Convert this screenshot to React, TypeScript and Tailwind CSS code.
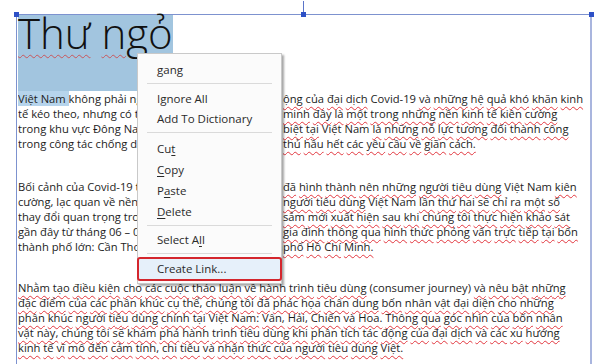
import React from 'react';

const plain = new Set(['Việt', 'Nam', 'Covid-19', '(consumer', 'journey)', '–', '06']);

function Words({ text }: { text: string }) {
  const parts = text.split(/(\s+)/);
  return (
    <>
      {parts.map((p, i) =>
        p.trim() === '' || plain.has(p) ? (
          <React.Fragment key={i}>{p}</React.Fragment>
        ) : (
          <span
            key={i}
            className="underline decoration-wavy decoration-[#e2373f] decoration-1 underline-offset-[3px]"
          >
            {p}
          </span>
        ),
      )}
    </>
  );
}

interface SplitLine {
  left: string;
  right: string;
}

// lines that run behind the context menu: the right half starts where the menu ends
function Split({ left, right }: SplitLine) {
  return (
    <div className="flex whitespace-nowrap">
      <span className="w-[265px] shrink-0 overflow-hidden">
        <Words text={left} />
      </span>
      <span>
        <Words text={right} />
      </span>
    </div>
  );
}

const p1: SplitLine[] = [
  { left: 'không phải ngoại lệ trước những tác đ', right: 'ộng của đại dịch Covid-19 và những hệ quả khó khăn kinh' },
  { left: 'tế kéo theo, nhưng có thể thấy thực tế đã chứng ', right: 'minh đây là một trong những nền kinh tế kiên cường' },
  { left: 'trong khu vực Đông Nam Á. Điều đặc ', right: 'biệt tại Việt Nam là những nỗ lực tương đối thành công' },
  { left: 'trong công tác chống dịch và người dân tuân ', right: 'thủ hầu hết các yêu cầu về giãn cách.' },
];

const p2: SplitLine[] = [
  { left: 'Bối cảnh của Covid-19 trong gần hai năm qua ', right: 'đã hình thành nên những người tiêu dùng Việt Nam kiên' },
  { left: 'cường, lạc quan về nền kinh tế. Báo cáo về ', right: 'người tiêu dùng Việt Nam lần thứ hai sẽ chỉ ra một số' },
  { left: 'thay đổi quan trọng trong xu hướng mua ', right: 'sắm mới xuất hiện sau khi chúng tôi thực hiện khảo sát' },
  { left: 'gần đây từ tháng 06 – 07/2021 với 1.000 hộ ', right: 'gia đình thông qua hình thức phỏng vấn trực tiếp tại bốn' },
  { left: 'thành phố lớn: Cần Thơ, Đà Nẵng, Hà Nội và Thành ', right: 'phố Hồ Chí Minh.' },
];

const p3 = [
  'Nhằm tạo điều kiện cho các cuộc thảo luận về hành trình tiêu dùng (consumer journey) và nêu bật những',
  'đặc điểm của các phân khúc cụ thể, chúng tôi đã phác họa chân dung bốn nhân vật đại diện cho những',
  'phân khúc người tiêu dùng chính tại Việt Nam: Vân, Hải, Chiến và Hoa. Thông qua góc nhìn của bốn nhân',
  'vật này, chúng tôi sẽ khám phá hành trình tiêu dùng khi phân tích tác động của đại dịch và các xu hướng',
  'kinh tế vĩ mô đến cảm tính, chi tiêu và nhận thức của người tiêu dùng Việt.',
];

function Item({ children, h = 'h-[21px]' }: { children: React.ReactNode; h?: string }) {
  return <div className={`${h} flex items-center pl-[19px]`}>{children}</div>;
}

function Sep() {
  return <div className="mx-[9px] my-[3px] h-px bg-[#dadada]" />;
}

function ContextMenu() {
  return (
    <div className="absolute left-[137px] top-[53px] w-[145px] border border-[#c9c9c9] bg-[#fbfbfb] pt-[5px] pb-[2px] text-[11.5px] text-[#2a2a2a] shadow-[2px_2px_2px_rgba(0,0,0,0.35)]">
      <Item h="h-[22px]">gang</Item>
      <div className="mx-[9px] mt-[2px] mb-[5px] h-px bg-[#dadada]" />
      <Item h="h-[20px]">Ignore All</Item>
      <Item h="h-[20px]">Add To Dictionary</Item>
      <div className="mx-[9px] mt-[3px] mb-[5px] h-px bg-[#dadada]" />
      <Item>
        Cu<span className="underline underline-offset-2">t</span>
      </Item>
      <Item>
        <span className="underline underline-offset-2">C</span>opy
      </Item>
      <Item>
        P<span className="underline underline-offset-2">a</span>ste
      </Item>
      <Item>
        <span className="underline underline-offset-2">D</span>elete
      </Item>
      <Sep />
      <Item>
        Select A<span className="underline underline-offset-2">l</span>l
      </Item>
      <Sep />
      <div className="-mx-px flex h-[24px] items-center rounded-[3px] border-2 border-[#d4262d] bg-[#e6f0fa] pl-[18px]">
        Create Link...
      </div>
    </div>
  );
}

export default function App() {
  return (
    <div className="relative h-[364px] w-[600px] overflow-hidden bg-white pl-[16px] pr-[8px] pt-[14px] font-['Open_Sans',sans-serif] text-[#1d1d1d]">
      <div className="relative h-[400px] border-l border-r-2 border-t border-l-[#7d92cf] border-r-[#a9b5de] border-t-[#7d92cf] pl-px">
        {/* rotate handle line + sizing handles */}
        <div className="absolute left-[286px] top-[-14px] h-[14px] w-px bg-[#5b74c9]" />
        <div className="absolute left-[-3px] top-[-3px] h-[5px] w-[5px] bg-[#2d50c6]" />
        <div className="absolute left-[284px] top-[-3px] h-[5px] w-[5px] bg-[#2d50c6]" />
        <div className="absolute right-[-4px] top-[-3px] h-[5px] w-[5px] bg-[#2d50c6]" />

        <div className="w-[155px] h-[76px] bg-[#a2c5df]">
          <div className="whitespace-nowrap text-[42px] font-light leading-[36px] text-[#111]">
            <span className="underline decoration-wavy decoration-[#c9555a] decoration-1 underline-offset-[5px]">Thư</span>{' '}
            <span className="underline decoration-wavy decoration-[#c9555a] decoration-1 underline-offset-[5px]">ngỏ</span>
          </div>
        </div>

        <div className="text-[11.2px] leading-[15px]">
          <div>
            {p1.map((l, i) =>
              i === 0 ? (
                <div key={i} className="flex whitespace-nowrap">
                  <span className="w-[265px] shrink-0 overflow-hidden">
                    <span className="bg-[#b6d4ec]">Việt Nam </span>
                    <Words text={l.left} />
                  </span>
                  <span>
                    <Words text={l.right} />
                  </span>
                </div>
              ) : (
                <Split key={i} {...l} />
              ),
            )}
          </div>
          <div className="mt-[28px]">
            {p2.map((l, i) => (
              <Split key={i} {...l} />
            ))}
          </div>
          <div className="mt-[26px]">
            {p3.map((l, i) => (
              <div key={i} className="whitespace-nowrap">
                <Words text={l} />
              </div>
            ))}
          </div>
        </div>
      </div>
      <ContextMenu />
    </div>
  );
}
